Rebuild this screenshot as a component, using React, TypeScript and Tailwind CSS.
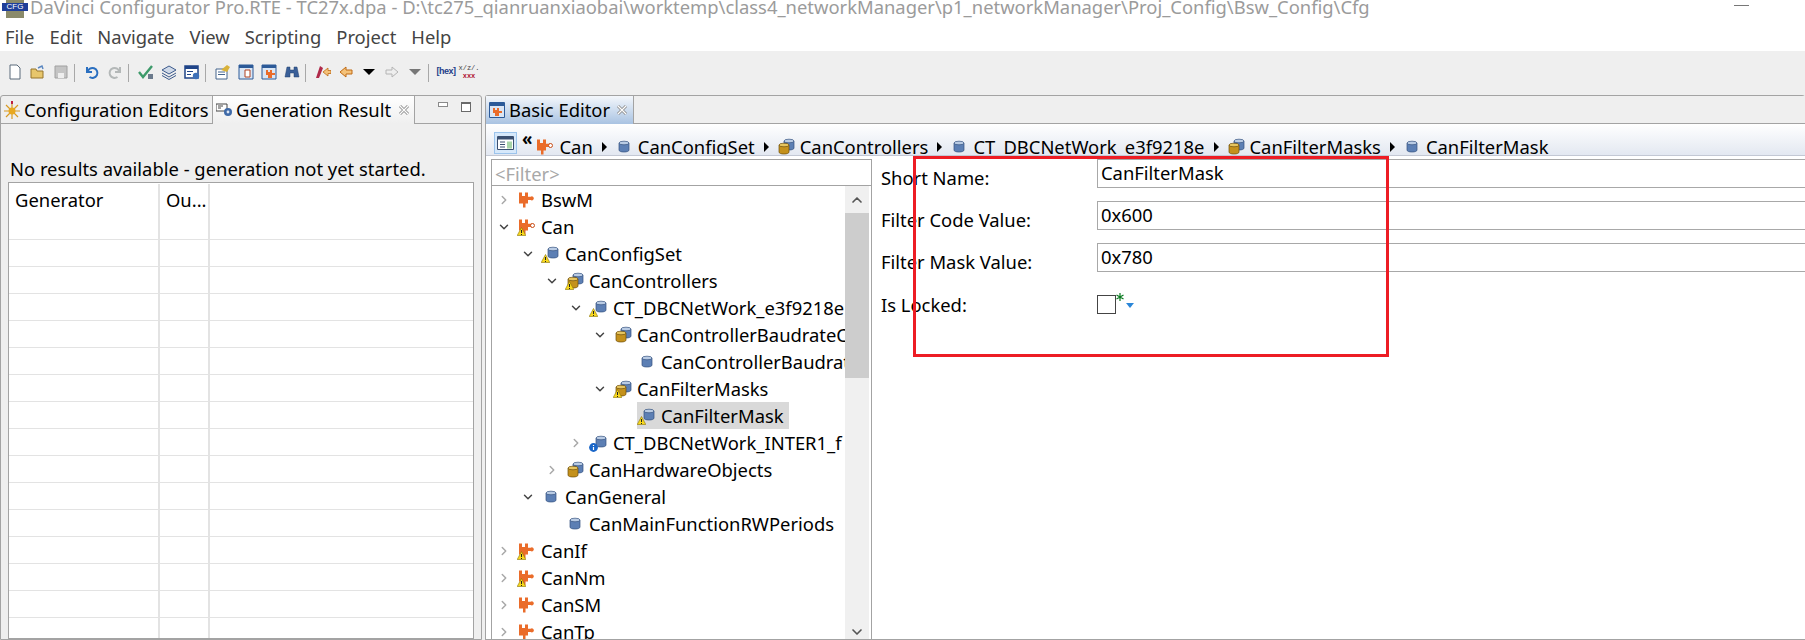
import { ChevronDown, ChevronRight, ChevronUp } from 'lucide-react'
import type { ReactNode } from 'react'

const FONT = "font-['Noto_Sans',sans-serif]"

function Warn() {
  return (
    <svg width="9" height="9" viewBox="0 0 9 9" className="absolute left-[0px] bottom-[0px]">
      <path d="M4.5 0.5 8.8 8.5H0.2Z" fill="#f8d81c" stroke="#8a7408" strokeWidth="0.6" />
      <path d="M4.5 3v3M4.5 7v1" stroke="#222" strokeWidth="1" />
    </svg>
  )
}

function Info() {
  return (
    <svg width="9" height="9" viewBox="0 0 9 9" className="absolute left-[0px] bottom-[0px]">
      <circle cx="4.5" cy="4.5" r="4.4" fill="#1a66c8" />
      <path d="M4.5 2v1M4.5 4v3" stroke="#fff" strokeWidth="1.2" />
    </svg>
  )
}

function CloseX() {
  return (
    <svg width="12" height="12" viewBox="0 0 12 12" className="shrink-0">
      <path d="M2 2l8 8M10 2L2 10" stroke="#8c8c8c" strokeWidth="3" />
      <path d="M2 2l8 8M10 2L2 10" stroke="#fff" strokeWidth="1.2" />
    </svg>
  )
}

function Puzzle({ hollow }: { hollow?: boolean }) {
  return (
    <svg width="18" height="18" viewBox="0 0 18 18">
      <path d="M1 1.5h3v3.5h3V1.5h3v4.3h2.6a2 2 0 1 1 0 3.2H10v3.5H7.5v4H5v-4H1z" fill="#ea6c2a" />
      {hollow && <circle cx="14.5" cy="7.5" r="2" fill="#fff" stroke="#c9501c" />}
    </svg>
  )
}

function Cyl({ x = 0, y = 0, body = '#5c7fb4', top = '#b9cbe4', edge = '#34527f' }) {
  return (
    <g transform={`translate(${x} ${y})`}>
      <path d="M0 2v7c0 1.4 2.2 2 5 2s5-.6 5-2V2z" fill={body} stroke={edge} strokeWidth="0.7" />
      <ellipse cx="5" cy="2" rx="5" ry="1.8" fill={top} stroke={edge} strokeWidth="0.7" />
    </g>
  )
}

function SingleCyl() {
  return (
    <svg width="18" height="18" viewBox="0 0 18 18">
      <Cyl x={4} y={3} />
    </svg>
  )
}

function OffsetCyl() {
  return (
    <svg width="18" height="18" viewBox="0 0 18 18">
      <Cyl x={6} y={2} />
    </svg>
  )
}

function GoldCyl() {
  return (
    <svg width="18" height="18" viewBox="0 0 18 18">
      <Cyl x={7} y={1} />
      <Cyl x={2} y={5} body="#c4911c" top="#e6c560" edge="#6e4e08" />
    </svg>
  )
}

type Kind = 'puzzle' | 'puzzleKnob' | 'cyl' | 'offset' | 'gold'

function NodeIcon({ kind, badge }: { kind: Kind; badge?: 'warn' | 'info' }) {
  return (
    <span className="relative flex h-[18px] w-[20px] shrink-0 items-center justify-center">
      {kind === 'puzzle' && <Puzzle />}
      {kind === 'puzzleKnob' && <Puzzle hollow />}
      {kind === 'cyl' && <SingleCyl />}
      {kind === 'offset' && <OffsetCyl />}
      {kind === 'gold' && <GoldCyl />}
      {badge === 'warn' && <Warn />}
      {badge === 'info' && <Info />}
    </span>
  )
}

const indent = ['pl-[4px]', 'pl-[28px]', 'pl-[52px]', 'pl-[76px]', 'pl-[100px]', 'pl-[124px]']

const treeRows: { level: number; arrow?: 'open' | 'closed'; kind: Kind; badge?: 'warn' | 'info'; label: string; selected?: boolean }[] = [
  { level: 0, arrow: 'closed', kind: 'puzzle', label: 'BswM' },
  { level: 0, arrow: 'open', kind: 'puzzleKnob', badge: 'warn', label: 'Can' },
  { level: 1, arrow: 'open', kind: 'offset', badge: 'warn', label: 'CanConfigSet' },
  { level: 2, arrow: 'open', kind: 'gold', badge: 'warn', label: 'CanControllers' },
  { level: 3, arrow: 'open', kind: 'offset', badge: 'warn', label: 'CT_DBCNetWork_e3f9218e' },
  { level: 4, arrow: 'open', kind: 'gold', label: 'CanControllerBaudrateConfig' },
  { level: 5, kind: 'cyl', label: 'CanControllerBaudrateConfig' },
  { level: 4, arrow: 'open', kind: 'gold', badge: 'warn', label: 'CanFilterMasks' },
  { level: 5, kind: 'offset', badge: 'warn', label: 'CanFilterMask', selected: true },
  { level: 3, arrow: 'closed', kind: 'offset', badge: 'info', label: 'CT_DBCNetWork_INTER1_f' },
  { level: 2, arrow: 'closed', kind: 'gold', label: 'CanHardwareObjects' },
  { level: 1, arrow: 'open', kind: 'cyl', label: 'CanGeneral' },
  { level: 2, kind: 'cyl', label: 'CanMainFunctionRWPeriods' },
  { level: 0, arrow: 'closed', kind: 'puzzle', badge: 'warn', label: 'CanIf' },
  { level: 0, arrow: 'closed', kind: 'puzzle', badge: 'warn', label: 'CanNm' },
  { level: 0, arrow: 'closed', kind: 'puzzle', label: 'CanSM' },
  { level: 0, arrow: 'closed', kind: 'puzzle', label: 'CanTp' },
]

const crumbs: { kind: Kind; label: string }[] = [
  { kind: 'puzzleKnob', label: 'Can' },
  { kind: 'cyl', label: 'CanConfigSet' },
  { kind: 'gold', label: 'CanControllers' },
  { kind: 'cyl', label: 'CT_DBCNetWork_e3f9218e' },
  { kind: 'gold', label: 'CanFilterMasks' },
  { kind: 'cyl', label: 'CanFilterMask' },
]

function Tool({ children }: { children: ReactNode }) {
  return (
    <svg width="16" height="16" viewBox="0 0 16 16" className="shrink-0">
      {children}
    </svg>
  )
}

function Sep() {
  return <span className="ml-[5px] mr-[9px] h-[18px] w-px shrink-0 bg-[#a8a8a8]" />
}

function Toolbar() {
  return (
    <div className="flex h-[44px] items-start bg-[#efefef] pl-[7px] pt-[13px]">
      <div className="flex items-center gap-[7px]">
        <Tool>
          <path d="M3 1h7l3 3v11H3z" fill="#fff" stroke="#5a6a7a" />
        </Tool>
        <Tool>
          <path d="M1 5h5l1 2h6v7H1z" fill="#e7c66c" stroke="#96752a" />
          <path d="M8 4l4-2 1 3" fill="none" stroke="#5a86c0" strokeWidth="1.4" />
        </Tool>
        <Tool>
          <path d="M2 2h12v12H2z" fill="#c4c4c4" stroke="#a0a0a0" />
          <path d="M5 9h6v5H5z" fill="#eee" />
        </Tool>
      </div>
      <Sep />
      <div className="flex items-center gap-[7px]">
        <Tool>
          <path d="M3 3v5h5M3.5 8a5 5 0 1 1 2 5" fill="none" stroke="#2a6fc0" strokeWidth="2" />
        </Tool>
        <Tool>
          <path d="M13 3v5H8M12.5 8a5 5 0 1 0-2 5" fill="none" stroke="#b4b8b8" strokeWidth="2" />
        </Tool>
      </div>
      <Sep />
      <div className="flex items-center gap-[7px]">
        <Tool>
          <path d="M1 8l4 5 9-11" fill="none" stroke="#3d9a6a" strokeWidth="2.4" />
          <path d="M10 10h5v5h-5z" fill="#6b7a8c" />
        </Tool>
        <Tool>
          <path d="M1 6l7-4 7 4-7 4z" fill="#cfd9e8" stroke="#3c5a8c" />
          <path d="M1 9l7 4 7-4M1 11.5l7 4 7-4" fill="none" stroke="#3c5a8c" />
        </Tool>
        <Tool>
          <path d="M1 2h13v12H1z" fill="#fff" stroke="#1f4488" strokeWidth="1.5" />
          <path d="M1 2h13v3H1z" fill="#1f4488" />
          <path d="M3 7h6v1H3zM3 10h4v1H3z" fill="#1f4488" />
          <circle cx="12" cy="12" r="3.2" fill="#3d70b8" />
        </Tool>
      </div>
      <Sep />
      <div className="flex items-center gap-[7px]">
        <Tool>
          <path d="M1 5h11v10H1z" fill="#fff" stroke="#44648c" />
          <path d="M3 8h7M3 10.5h7" stroke="#44648c" />
          <path d="M6 6l6-5 3 2-3 5z" fill="#d9b23a" />
        </Tool>
        <Tool>
          <path d="M1 1h14v14H1z" fill="#dbe6f4" stroke="#2c5a98" />
          <path d="M1 1h14v3H1z" fill="#2c5a98" />
          <path d="M7 6h5v7H7z" fill="#fff" stroke="#b04020" />
        </Tool>
        <Tool>
          <path d="M1 1h14v14H1z" fill="#dbe6f4" stroke="#2c5a98" />
          <path d="M1 1h14v3H1z" fill="#2c5a98" />
          <path d="M5 6h2v2h2V6h2v3h3v2h-3v3H7v-3H5z" fill="#ea6c2a" />
        </Tool>
        <Tool>
          <path d="M3 3h3v3h4V3h3l2 10h-5V9H6v4H1z" fill="#3a5f98" stroke="#23406e" strokeWidth="0.5" />
        </Tool>
      </div>
      <Sep />
      <div className="flex items-center gap-[7px]">
        <Tool>
          <path d="M1 14L5 2l3 2-4 10z" fill="#b02a4a" />
          <path d="M8 8l5-4v2.5h3v3h-3V12z" fill="#f4c27a" stroke="#c06a14" strokeWidth="0.8" />
        </Tool>
        <Tool>
          <path d="M2 8l6-5v3h6v4H8v3z" fill="#f4c27a" stroke="#c06a14" />
        </Tool>
        <Tool>
          <path d="M2 5h12l-6 6z" fill="#000" />
        </Tool>
        <Tool>
          <path d="M14 8L8 3v3H2v4h6v3z" fill="#eee" stroke="#b4b4b4" />
        </Tool>
        <Tool>
          <path d="M2 5h12l-6 6z" fill="#777" />
        </Tool>
      </div>
      <Sep />
      <div className="flex items-center gap-[7px]">
        <span className="flex h-[16px] w-[16px] shrink-0 items-center justify-center font-['Liberation_Sans',sans-serif] text-[9px] font-bold tracking-[-0.5px] text-[#24408a]">
          [hex]
        </span>
        <span className="flex h-[16px] w-[16px] shrink-0 flex-col items-center justify-center font-['Liberation_Mono',monospace] text-[7px] leading-[8px] text-[#444]">
          <span>x/z/.</span>
          <span className="font-bold text-[#b01030]">xxx</span>
        </span>
      </div>
    </div>
  )
}

function LeftPanel() {
  return (
    <section className="flex w-[482px] shrink-0 flex-col rounded-t-[3px] border border-[#a3a3a3] bg-[#efefef]">
      <div className="flex h-[28px] shrink-0">
        <div className="flex w-[212px] items-center gap-[4px] border-b border-r border-[#a3a3a3] pl-[3px]">
          <svg width="16" height="18" viewBox="0 0 16 18" className="shrink-0">
            <path d="M8 2v16M0 10h16M2 4l12 12M14 4L2 16" stroke="#d89a24" strokeWidth="1.2" />
            <circle cx="8" cy="10" r="3.5" fill="#e8a820" />
            <path d="M7 0h2v3H7z" fill="#c02040" />
          </svg>
          <span className="whitespace-nowrap">Configuration Editors</span>
        </div>
        <div className="flex w-[202px] items-center border-r border-[#a3a3a3] bg-gradient-to-b from-white to-[#efefef] pl-[3px]">
          <svg width="17" height="16" viewBox="0 0 17 16" className="mr-[3px] shrink-0">
            <path d="M0 2h11v7H0z" fill="#fff" stroke="#444" />
            <path d="M2 4h5M2 6h3" stroke="#444" />
            <circle cx="12" cy="10" r="4" fill="#3f6aa8" />
            <circle cx="12" cy="10" r="1.4" fill="#dce6f4" />
          </svg>
          <span className="mr-[7px] whitespace-nowrap">Generation Result</span>
          <CloseX />
        </div>
        <div className="flex flex-1 items-start border-b border-[#a3a3a3] pl-[23px] pt-[6px]">
          <span className="h-[5px] w-[10px] border border-[#8a8a8a] bg-white" />
          <span className="ml-[13px] h-[10px] w-[10px] border border-[#6a6a6a] border-t-2 bg-white" />
        </div>
      </div>
      <p className="mt-[31px] h-[27px] whitespace-nowrap pl-[9px] leading-[27px] text-black">
        No results available - generation not yet started.
      </p>
      <div className="mx-[7px] flex-1 overflow-hidden border border-[#a3a3a3] bg-white pt-[1px]">
        <div className="grid h-[56px] grid-cols-[151px_50px_1fr] border-b border-[#e3e3e3]">
          <span className="border-r-2 border-[#e3e3e3] pl-[6px] pt-[2px]">Generator</span>
          <span className="border-r-2 border-[#e3e3e3] pl-[6px] pt-[2px]">Ou...</span>
          <span />
        </div>
        {Array.from({ length: 15 }).map((_, i) => (
          <div key={i} className="grid h-[27px] grid-cols-[151px_50px_1fr] border-b border-[#e3e3e3]">
            <span className="border-r-2 border-[#e3e3e3]" />
            <span className="border-r-2 border-[#e3e3e3]" />
            <span />
          </div>
        ))}
      </div>
    </section>
  )
}

function Breadcrumb() {
  return (
    <div className="relative flex h-[31px] shrink-0 items-start overflow-hidden bg-gradient-to-b from-white to-[#e3e8f1] pl-[8px] pt-[8px]">
      <span className="flex h-[22px] w-[23px] shrink-0 items-center justify-center border border-[#9cc4ec] bg-[#d6e8fa]">
        <svg width="17" height="14" viewBox="0 0 17 14">
          <path d="M0.5 0.5h16v13H0.5z" fill="#fff" stroke="#3a4f70" />
          <path d="M1 1h15v2.5H1z" fill="#3a4f70" />
          <path d="M3 6h5M3 8.5h5M3 11h5" stroke="#3a4f70" />
          <path d="M10 5.5h5v7h-5z" fill="#a8d4a8" />
        </svg>
      </span>
      <span className="ml-[5px] mt-[-3px] shrink-0 text-[17px] font-bold leading-[20px]">«</span>
      <div className="ml-[3px] mt-[1px] flex items-center">
        {crumbs.map((c, i) => (
          <div key={i} className="flex items-center">
            <span className="mr-[4px] flex w-[20px] justify-center">
              <NodeIcon kind={c.kind} />
            </span>
            <span className="whitespace-nowrap leading-[27px]">{c.label}</span>
            {i < crumbs.length - 1 && (
              <svg width="6" height="10" viewBox="0 0 6 10" className="ml-[9px] mr-[6px] shrink-0">
                <path d="M0 0l5 5-5 5z" fill="#000" />
              </svg>
            )}
          </div>
        ))}
      </div>
    </div>
  )
}

function TreeRow({ row }: { row: (typeof treeRows)[number] }) {
  return (
    <div className={`flex h-[27px] items-center whitespace-nowrap ${indent[row.level]}`}>
      <span className="flex w-[16px] shrink-0 justify-center">
        {row.arrow === 'open' && <ChevronDown size={14} strokeWidth={2.5} className="text-[#444]" />}
        {row.arrow === 'closed' && <ChevronRight size={14} strokeWidth={2.5} className="text-[#a8a8a8]" />}
      </span>
      <span className={`ml-[5px] flex h-[27px] items-center gap-[4px] pr-[5px] ${row.selected ? 'bg-[#d9d9d9]' : ''}`}>
        <NodeIcon kind={row.kind} badge={row.badge} />
        <span>{row.label}</span>
      </span>
    </div>
  )
}

function Tree() {
  return (
    <div className="ml-[5px] flex w-[381px] shrink-0 flex-col overflow-hidden border border-b-0 border-[#a3a3a3]">
      <div className="h-[26px] shrink-0 border-b border-[#a3a3a3] pl-[3px] leading-[28px] text-[#a8a8a8]">&lt;Filter&gt;</div>
      <div className="flex min-h-0 flex-1 pr-[2px]">
        <div className="w-[353px] shrink-0 overflow-hidden">
          {treeRows.map((r, i) => (
            <TreeRow key={i} row={r} />
          ))}
        </div>
        <div className="flex w-[24px] shrink-0 flex-col bg-[#f0f0f0]">
          <span className="flex h-[27px] shrink-0 items-center justify-center">
            <ChevronUp size={16} strokeWidth={2.5} className="text-[#555]" />
          </span>
          <span className="h-[165px] shrink-0 bg-[#cdcdcd]" />
          <span className="flex-1" />
          <span className="flex h-[14px] shrink-0 items-center justify-center">
            <ChevronDown size={16} strokeWidth={2.5} className="text-[#555]" />
          </span>
        </div>
      </div>
    </div>
  )
}

const fields = [
  { label: 'Short Name:', value: 'CanFilterMask' },
  { label: 'Filter Code Value:', value: '0x600' },
  { label: 'Filter Mask Value:', value: '0x780' },
]

function Form() {
  return (
    <div className="ml-[9px] flex min-w-0 flex-1 flex-col">
      <div className="flex flex-col gap-[13px]">
        {fields.map(f => (
          <div key={f.label} className="flex h-[29px] items-start">
            <label className="mt-[4px] w-[216px] shrink-0 leading-[29px]">{f.label}</label>
            <div className="h-[29px] flex-1 border border-r-0 border-[#a8a8a8] pl-[3px] leading-[25px]">{f.value}</div>
          </div>
        ))}
      </div>
      <div className="mt-[23px] flex items-start">
        <label className="mt-[-5px] w-[216px] shrink-0 leading-[29px]">Is Locked:</label>
        <span className="h-[19px] w-[19px] shrink-0 border border-[#444] bg-white" />
        <svg width="8" height="8" viewBox="0 0 8 8" className="mt-[-2px] shrink-0">
          <path d="M4 0v8M0.5 2l7 4M7.5 2l-7 4" stroke="#0a7a20" strokeWidth="1.2" />
        </svg>
        <svg width="8" height="5" viewBox="0 0 8 5" className="ml-[2px] mt-[8px] shrink-0">
          <path d="M0 0h8L4 5z" fill="#2a86d8" />
        </svg>
      </div>
    </div>
  )
}

function RightPanel() {
  return (
    <section className="flex min-w-0 flex-1 flex-col rounded-t-[3px] border border-r-0 border-[#a3a3a3] bg-white">
      <div className="flex h-[28px] shrink-0 bg-[#efefef]">
        <div className="flex w-[148px] items-center gap-[4px] border-r border-[#a3a3a3] bg-gradient-to-b from-[#f4f7fb] to-[#a9c3e2] pl-[3px]">
          <svg width="16" height="16" viewBox="0 0 16 16" className="shrink-0">
            <path d="M0.5 0.5h15v15H0.5z" fill="#dbe6f4" stroke="#2c5a98" />
            <path d="M1 1h14v3H1z" fill="#2c5a98" />
            <path d="M4 6h2v2h2V6h2v3h3v2h-3v3H6v-3H4z" fill="#ea6c2a" />
          </svg>
          <span className="mr-[2px] whitespace-nowrap">Basic Editor</span>
          <CloseX />
        </div>
        <div className="flex-1 border-b border-[#a3a3a3]" />
      </div>
      <Breadcrumb />
      <div className="h-[4px] shrink-0 border-t border-[#c3c8d4]" />
      <div className="flex min-h-0 flex-1">
        <Tree />
        <Form />
      </div>
    </section>
  )
}

export default function App() {
  return (
    <div className={`relative h-[640px] w-[1805px] overflow-hidden bg-[#efefef] text-[18.4px] text-black ${FONT}`}>
      {/* Window title, cut off by the top of the capture */}
      <div className="flex h-[22px] items-start overflow-hidden bg-white">
        <span className="relative ml-[6px] h-[18px] w-[18px] shrink-0 bg-[#8a8a6a]">
          <span className="absolute left-[-4px] top-[3px] flex h-[8px] w-[26px] items-center justify-center bg-[#1f3f9a] font-['Liberation_Sans',sans-serif] text-[8px] text-white">
            CFG
          </span>
        </span>
        <span className="ml-[6px] mt-[-6px] whitespace-nowrap leading-[25px] text-[#9b9b9b]">
          DaVinci Configurator Pro.RTE - TC27x.dpa - D:\tc275_qianruanxiaobai\worktemp\class4_networkManager\p1_networkManager\Proj_Config\Bsw_Config\Cfg
        </span>
        <span className="ml-auto mr-[56px] mt-[5px] h-px w-[15px] shrink-0 bg-[#777]" />
      </div>
      <nav className="flex h-[29px] items-center gap-[15px] bg-white pl-[5px] text-[#444]">
        {['File', 'Edit', 'Navigate', 'View', 'Scripting', 'Project', 'Help'].map(m => (
          <span key={m}>{m}</span>
        ))}
      </nav>
      <Toolbar />
      <main className="flex h-[545px] gap-[3px]">
        <LeftPanel />
        <RightPanel />
      </main>
      {/* Red annotation drawn over the screenshot */}
      <div className="pointer-events-none absolute left-[913px] top-[156px] h-[201px] w-[476px] border-[3px] border-[#ed1c24]" />
    </div>
  )
}
